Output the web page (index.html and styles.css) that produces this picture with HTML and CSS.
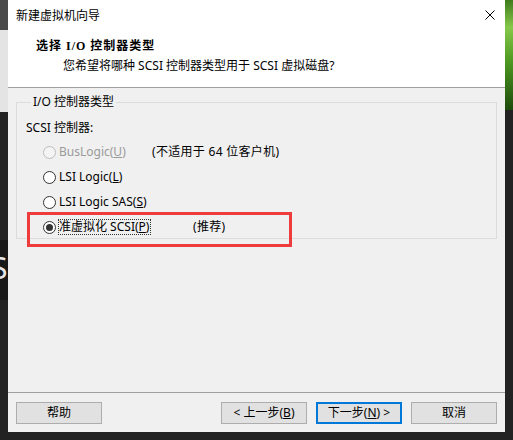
FILE: index.html
```html
<!DOCTYPE html>
<html lang="zh-CN">
<head>
<meta charset="utf-8">
<title>新建虚拟机向导</title>
<link rel="stylesheet" href="styles.css">
</head>
<body>
<div class="desktop">
  <div class="bg-left-top"></div>
  <div class="bg-left-light"></div>
  <div class="bg-left-band"><span class="bg-letter">S</span></div>
  <div class="bg-right-green"></div>

  <div class="dialog">
    <div class="titlebar">
      <span class="title">新建虚拟机向导</span>
      <svg class="close" width="10" height="10" viewBox="0 0 10 10" aria-label="关闭">
        <path d="M0.5 0.5 L9.5 9.5 M9.5 0.5 L0.5 9.5" stroke="#000" stroke-width="1" fill="none"/>
      </svg>
    </div>
    <div class="header">
      <div class="h-title">选择 I/O 控制器类型</div>
      <div class="h-sub">您希望将哪种 SCSI 控制器类型用于 SCSI 虚拟磁盘?</div>
    </div>
    <div class="content">
      <fieldset class="group">
        <legend>I/O 控制器类型</legend>
        <div class="group-label">SCSI 控制器:</div>
        <div class="options">
          <div class="opt disabled">
            <span class="radio"></span>
            <span class="opt-text w-bus">BusLogic(<u>U</u>)</span>
            <span class="note">(不适用于 64 位客户机)</span>
          </div>
          <div class="opt">
            <span class="radio"></span>
            <span class="opt-text">LSI Logic(<u>L</u>)</span>
          </div>
          <div class="opt">
            <span class="radio"></span>
            <span class="opt-text">LSI Logic SAS(<u>S</u>)</span>
          </div>
          <div class="opt">
            <span class="radio checked"></span>
            <span class="opt-text w-pv"><span class="focus">准虚拟化 SCSI(<u>P</u>)</span></span>
            <span class="note">(推荐)</span>
          </div>
        </div>
      </fieldset>
      <div class="highlight"></div>
    </div>
    <div class="footer">
      <button class="btn">帮助</button>
      <span class="spacer"></span>
      <button class="btn">&lt; 上一步(<u>B</u>)</button>
      <button class="btn default">下一步(<u>N</u>) &gt;</button>
      <button class="btn">取消</button>
    </div>
  </div>
</div>
</body>
</html>
```
FILE: styles.css
```css
html, body {
  margin: 0;
  padding: 0;
}
body {
  width: 513px;
  height: 440px;
  overflow: hidden;
  background: #1f1f1f;
  font-family: "Noto Sans", "Noto Sans CJK SC", sans-serif;
  font-size: 12px;
  color: #000;
}
.desktop {
  position: relative;
  width: 513px;
  height: 440px;
  background: #222222;
}
.bg-left-top {
  position: absolute;
  left: 0; top: 0;
  width: 8px; height: 30px;
  background: #4a4a4a;
}
.bg-left-light {
  position: absolute;
  left: 0; top: 30px;
  width: 8px; height: 82px;
  background: #e4e4e4;
}
.bg-left-band {
  position: absolute;
  left: 0; top: 240px;
  width: 8px; height: 60px;
  background: #191919;
  overflow: hidden;
}
.bg-letter {
  position: absolute;
  left: -9px;
  top: 13px;
  font-family: "Noto Sans", sans-serif;
  font-size: 30px;
  line-height: 30px;
  color: #e6e6e6;
}
.bg-right-green {
  position: absolute;
  right: 0; top: 0;
  width: 8px; height: 110px;
  background: linear-gradient(180deg, #3f7a1c 0%, #86c84a 25%, #4f9a22 55%, #1d4a0c 100%);
}
.dialog {
  position: absolute;
  left: 8px;
  top: 0;
  width: 497px;
  height: 432px;
  display: flex;
  flex-direction: column;
  background: #f0f0f0;
}
.titlebar {
  height: 30px;
  background: #fff;
  display: flex;
  align-items: center;
  justify-content: space-between;
  padding: 0 10px 0 8px;
}
.title {
  line-height: 16px;
  font-family: "Noto Sans CJK SC", sans-serif;
}
.close {
  display: block;
}
.header {
  background: #fff;
  border-bottom: 1px solid #a0a0a0;
  padding-top: 8px;
  box-sizing: border-box;
  height: 58px;
}
.h-title {
  padding-left: 28px;
  line-height: 16px;
  font-weight: bold;
  font-family: "Liberation Serif", "Noto Sans CJK SC", serif;
  font-size: 12px;
  letter-spacing: 1px;
}
.h-sub {
  margin-top: 4px;
  padding-left: 55px;
  line-height: 16px;
}
.content {
  position: relative;
  flex: 1;
}
.group {
  margin: 6px 8px 0 8px;
  padding: 10px 0 3px 9px;
  border: 1px solid #dcdcdc;
  min-width: 0;
}
.group legend {
  margin-left: 5px;
  padding: 0 2px;
  line-height: 16px;
}
.group-label {
  line-height: 16px;
}
.options {
  display: flex;
  flex-direction: column;
  gap: 9px;
  padding-top: 8px;
}
.opt {
  display: flex;
  align-items: center;
  height: 16px;
  line-height: 16px;
  padding-left: 17px;
}
.radio {
  width: 13px;
  height: 13px;
  box-sizing: border-box;
  border: 1px solid #333;
  border-radius: 50%;
  background: #fff;
  margin-right: 3px;
  flex: none;
  display: flex;
  align-items: center;
  justify-content: center;
}
.radio.checked::after {
  content: "";
  width: 7px;
  height: 7px;
  border-radius: 50%;
  background: #333;
}
.disabled .radio {
  border-color: #bcbcbc;
  background: #f4f4f4;
}
.disabled .opt-text {
  color: #9a9a9a;
}
.opt-text {
  white-space: nowrap;
}
.w-bus {
  width: 93px;
}
.w-pv {
  width: 134px;
}
.focus {
  display: inline-block;
  line-height: 14px;
  outline: 1px dotted #333;
  outline-offset: 0;
  padding: 0 1px 0 0;
}
.note {
  white-space: nowrap;
  letter-spacing: 0.3px;
}
.highlight {
  position: absolute;
  left: 19px;
  top: 124px;
  width: 265px;
  height: 35px;
  border: 3px solid #ee3b3b;
  box-sizing: border-box;
  pointer-events: none;
}
.footer {
  height: 40px;
  box-sizing: border-box;
  border-top: 1px solid #a0a0a0;
  padding: 9px 8px 0 8px;
  display: flex;
  align-items: flex-start;
  gap: 9px;
}
.spacer {
  flex: 1;
}
.btn {
  width: 86px;
  height: 22px;
  margin: 0;
  padding: 0;
  box-sizing: border-box;
  background: #e1e1e1;
  border: 1px solid #adadad;
  border-radius: 0;
  font-family: "Noto Sans", "Noto Sans CJK SC", sans-serif;
  font-size: 12px;
  line-height: 18px;
  color: #000;
}
.btn.default {
  border: 2px solid #0078d7;
}
```
